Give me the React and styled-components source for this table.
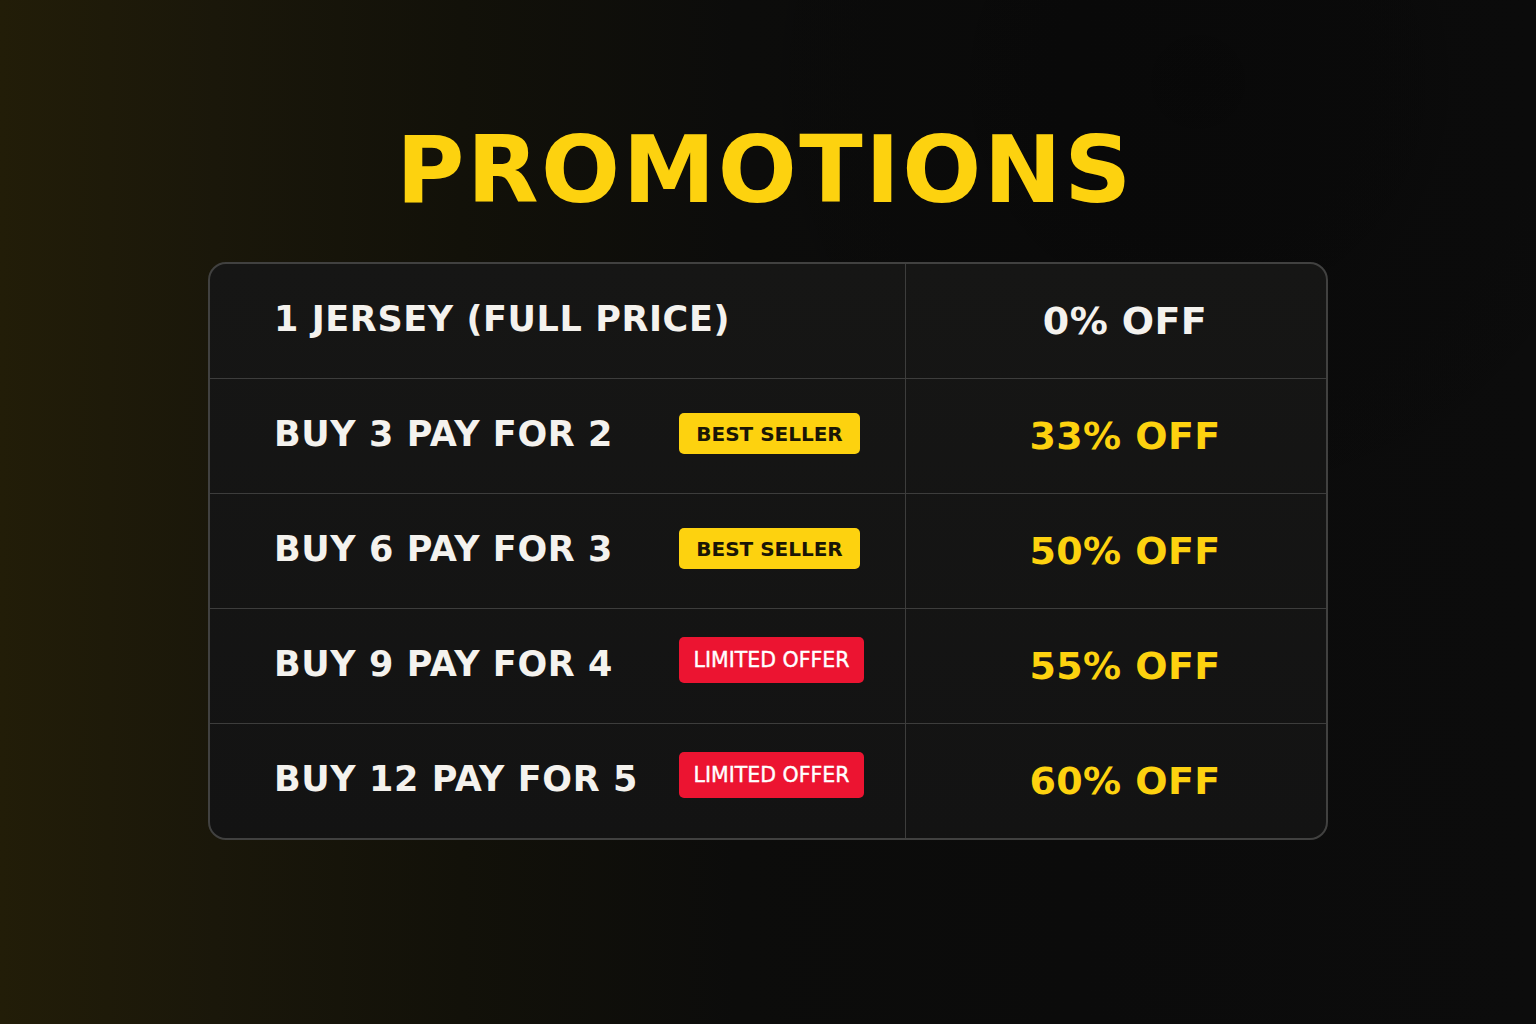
import styled, { createGlobalStyle } from "styled-components";

const GlobalStyle = createGlobalStyle`
  html, body {
    margin: 0;
    padding: 0;
    background: #0a0a09;
  }
`;

const promos = [
  { label: "1 JERSEY (FULL PRICE)", off: "0% OFF", muted: true },
  { label: "BUY 3 PAY FOR 2", badge: "BEST SELLER", tone: "yellow", off: "33% OFF" },
  { label: "BUY 6 PAY FOR 3", badge: "BEST SELLER", tone: "yellow", off: "50% OFF" },
  { label: "BUY 9 PAY FOR 4", badge: "LIMITED OFFER", tone: "red", off: "55% OFF" },
  { label: "BUY 12 PAY FOR 5", badge: "LIMITED OFFER", tone: "red", off: "60% OFF" },
];

const App = () => {
  return (
    <>
      <GlobalStyle />
      <StyledPage>
        <StyledTitle>PROMOTIONS</StyledTitle>
        <StyledTable>
          {promos.map((p, i) => (
            <Row key={p.label} $last={i === promos.length - 1}>
              <LabelCell>
                <Label>{p.label}</Label>
                {p.badge && <Badge $tone={p.tone}>{p.badge}</Badge>}
              </LabelCell>
              <OffCell>
                <Off $muted={p.muted}>{p.off}</Off>
              </OffCell>
            </Row>
          ))}
        </StyledTable>
      </StyledPage>
    </>
  );
};

const StyledPage = styled.div`
  width: 1536px;
  height: 1024px;
  box-sizing: border-box;
  padding-top: 118px;
  display: flex;
  flex-direction: column;
  align-items: center;
  overflow: hidden;
  background:
    radial-gradient(ellipse 500px 500px at 78% 8%, rgba(0, 0, 0, 0.25), rgba(0, 0, 0, 0) 100%),
    linear-gradient(90deg, #221d08 0%, #1a170a 14%, #121109 30%, #0c0c0b 48%, #0b0b0b 70%, #0c0c0c 100%);
`;

const StyledTitle = styled.h1`
  margin: 0;
  font-family: "DejaVu Sans", "Liberation Sans", sans-serif;
  font-weight: 700;
  font-size: 93px;
  line-height: 104px;
  letter-spacing: 2.5px;
  color: #fdd20f;
  margin-right: 6px;
`;

const StyledTable = styled.div`
  margin-top: 40px;
  width: 1120px;
  box-sizing: border-box;
  border: 2px solid #414140;
  border-radius: 18px;
  overflow: hidden;
  background: linear-gradient(180deg, #161615 0%, #131313 100%);
  display: flex;
  flex-direction: column;
`;

const Row = styled.div`
  display: grid;
  grid-template-columns: 696px 1fr;
  height: 114px;
  border-bottom: ${(p) => (p.$last ? "none" : "1.5px solid #3d3d3c")};
`;

const LabelCell = styled.div`
  display: flex;
  align-items: center;
  padding-left: 64px;
  border-right: 1.5px solid #3d3d3c;
`;

const Label = styled.span`
  width: 405px;
  margin-bottom: 4px;
  font-family: "DejaVu Sans", "Liberation Sans", sans-serif;
  font-weight: 700;
  font-size: 35px;
  letter-spacing: 0.6px;
  color: #f4f2ee;
  white-space: nowrap;
`;

const Badge = styled.span`
  display: inline-flex;
  align-items: center;
  justify-content: center;
  box-sizing: border-box;
  margin-bottom: ${(p) => (p.$tone === "red" ? "12px" : "5px")};
  height: ${(p) => (p.$tone === "red" ? "46px" : "41px")};
  width: ${(p) => (p.$tone === "red" ? "185px" : "181px")};
  border-radius: 5px;
  font-family: "DejaVu Sans", "Liberation Sans", sans-serif;
  font-weight: ${(p) => (p.$tone === "red" ? 400 : 700)};
  font-size: ${(p) => (p.$tone === "red" ? "20.5px" : "20px")};
  color: ${(p) => (p.$tone === "red" ? "#ffffff" : "#1a1606")};
  background: ${(p) => (p.$tone === "red" ? "#ec1431" : "#fdd20f")};
  -webkit-text-stroke: ${(p) => (p.$tone === "red" ? "0.4px #ffffff" : "0")};
`;

const OffCell = styled.div`
  display: flex;
  align-items: center;
  justify-content: center;
  padding-left: 18px;
`;

const Off = styled.span`
  font-family: "DejaVu Sans", "Liberation Sans", sans-serif;
  font-weight: 700;
  font-size: 38px;
  letter-spacing: 0.4px;
  color: ${(p) => (p.$muted ? "#f4f2ee" : "#fdd20f")};
`;

export default App;
